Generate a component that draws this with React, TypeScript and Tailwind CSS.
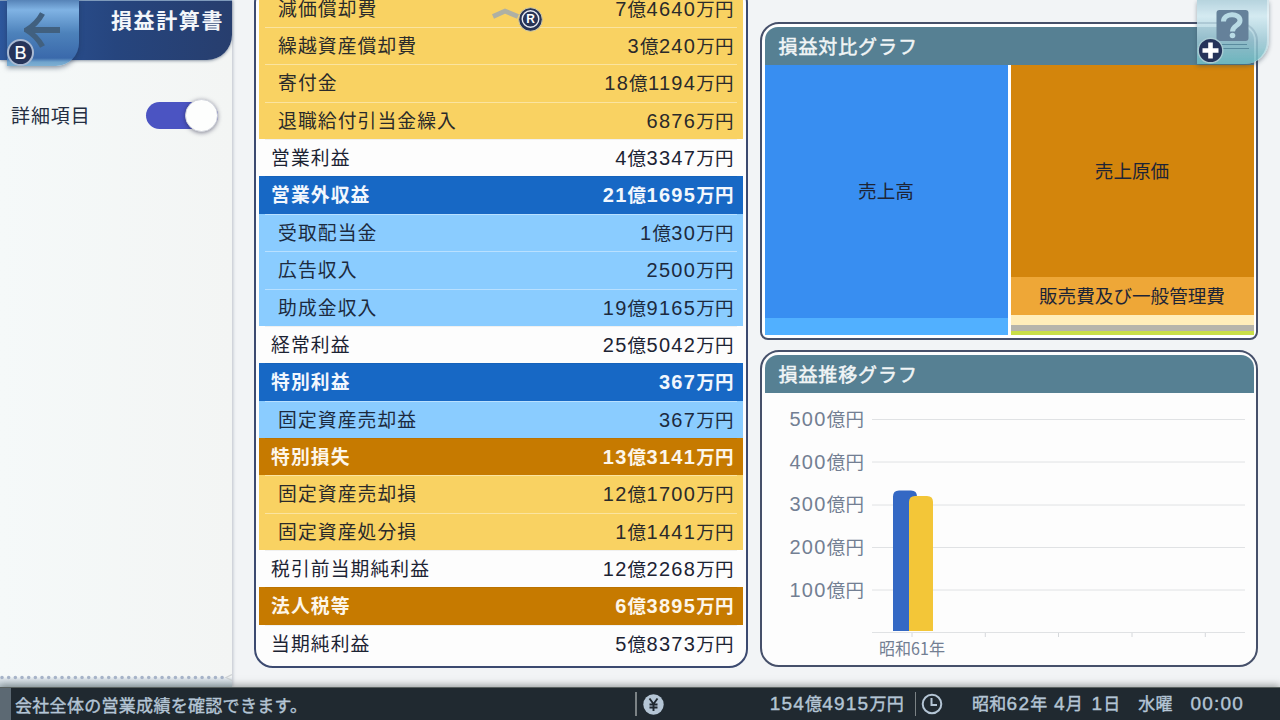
import clsx from 'clsx';

type Kind = 'total' | 'income' | 'incomeItem' | 'cost' | 'costItem';

const rows: { label: string; value: string; kind: Kind }[] = [
  { label: '減価償却費', value: '7億4640万円', kind: 'costItem' },
  { label: '繰越資産償却費', value: '3億240万円', kind: 'costItem' },
  { label: '寄付金', value: '18億1194万円', kind: 'costItem' },
  { label: '退職給付引当金繰入', value: '6876万円', kind: 'costItem' },
  { label: '営業利益', value: '4億3347万円', kind: 'total' },
  { label: '営業外収益', value: '21億1695万円', kind: 'income' },
  { label: '受取配当金', value: '1億30万円', kind: 'incomeItem' },
  { label: '広告収入', value: '2500万円', kind: 'incomeItem' },
  { label: '助成金収入', value: '19億9165万円', kind: 'incomeItem' },
  { label: '経常利益', value: '25億5042万円', kind: 'total' },
  { label: '特別利益', value: '367万円', kind: 'income' },
  { label: '固定資産売却益', value: '367万円', kind: 'incomeItem' },
  { label: '特別損失', value: '13億3141万円', kind: 'cost' },
  { label: '固定資産売却損', value: '12億1700万円', kind: 'costItem' },
  { label: '固定資産処分損', value: '1億1441万円', kind: 'costItem' },
  { label: '税引前当期純利益', value: '12億2268万円', kind: 'total' },
  { label: '法人税等', value: '6億3895万円', kind: 'cost' },
  { label: '当期純利益', value: '5億8373万円', kind: 'total' },
];

const rowStyle: Record<Kind, string> = {
  total: 'bg-[#fdfdfd] text-[#1c2333]',
  income: 'bg-[#1768c5] text-[#f2f7fd] font-bold',
  incomeItem: 'bg-[#8accff] text-[#1c2a3e]',
  cost: 'bg-[#c67a00] text-[#fdf6ea] font-bold',
  costItem: 'bg-[#f9d262] text-[#2a2a2a]',
};

const yLabels = ['500億円', '400億円', '300億円', '200億円', '100億円'];

// Digits are set a little larger and wider than the kanji around them
const Amount = ({ text, small }: { text: string; small?: boolean }) => (
  <span className={clsx('inline-flex items-baseline whitespace-pre', small ? 'text-[17px] tracking-[0.3px]' : 'text-[18.5px] tracking-[0.4px]')}>
    {text.split(/([\d:]+)/).map((part, i) =>
      /\d/.test(part) ? (
        <span key={i} className={clsx("font-['Liberation_Sans']", small ? 'text-[19px] tracking-[1.2px]' : 'text-[20px] tracking-[1.3px]')}>{part}</span>
      ) : (
        <span key={i}>{part}</span>
      )
    )}
  </span>
);

const PanelTitle = ({ children }: { children: string }) => (
  <h2 className="h-[38px] rounded-t-[13px] bg-[#568093] pl-3.5 text-[19px] leading-[37px] tracking-[0.9px] text-[#f1f5f6] [-webkit-text-stroke:0.5px]">
    {children}
  </h2>
);

const Sidebar = () => (
  <aside className="relative z-10 flex w-[232px] shrink-0 flex-col bg-gradient-to-r from-[#f5f9f9] to-[#f3f5f4] shadow-[1px_0_3px_rgba(90,100,120,0.35)]">
    <header className="relative h-[60px] shrink-0 rounded-br-[25px] border-t border-[#7e9abb] bg-gradient-to-r from-[#2d579c] via-[#26457e] to-[#273e6e] pr-2 text-right text-[21px] leading-[37px] font-bold tracking-[1.6px] text-[#f3f6fa] shadow-[0_1px_3px_rgba(40,60,90,0.5)]">
      損益計算書
      <button className="absolute -top-px left-[7px] flex h-[66px] w-[72px] justify-center rounded-br-[23px] bg-linear-[180deg,#5683b7_0%,#80b3e4_15%,#4d82bb_50%,#3a69ab_88%,#70a4cd_94%,#7eb0d3_100%] pt-[11px] shadow-[0_2px_5px_rgba(30,50,80,0.5)]">
        <svg width="38" height="38" viewBox="0 0 38 38" fill="none" stroke="#41607f" strokeWidth="6">
          <path d="M36 19H6" />
          <path d="M18.500 2.500C15.500 8 10 14.500 2.500 19C10 23.500 15.500 30 18.500 35.500" strokeWidth="5.5" />
        </svg>
      </button>
      <span className="absolute top-[38px] left-[7px] flex size-[27px] items-center justify-center rounded-full border-2 border-[#a9b9d2] bg-[#26345a] font-['Liberation_Sans'] text-[18px] font-normal leading-none tracking-normal text-white [-webkit-text-stroke:0.2px]">
        B
      </span>
    </header>

    <div className="mt-[41px] flex items-center justify-between pr-3.5 pl-[11px]">
      <span className="text-[19px] tracking-[0.9px] text-[#242e42]">詳細項目</span>
      <div className="flex h-[27px] w-[72px] items-center justify-end rounded-full bg-[#4b54c2]">
        <span className="size-[33px] shrink-0 rounded-full border border-[#d4d7de] bg-[#fdfefd] shadow-[0_1px_4px_rgba(30,30,60,0.5)]" />
      </div>
    </div>

    <div className="mt-auto h-[13px] bg-gradient-to-b from-transparent from-20% via-[#dce4ea] via-40% to-[#bccbd3]">
      <svg width="232" height="7" className="block">
        <path d="M2 3.5H226" stroke="#a8b5ca" strokeWidth="3.6" strokeLinecap="round" strokeDasharray="0 6.67" />
        <path d="M232 0.5L226 3.5L232 6.5" stroke="#cfd3d5" strokeWidth="1.2" fill="none" />
      </svg>
    </div>
  </aside>
);

const StatementTable = () => (
  <section className="relative -mt-4 ml-[22px] h-[684px] w-[494px] shrink-0 rounded-[19px] border-2 border-[#3c4a70] bg-[#fdfdfd] px-[3px] pt-[3.7px]">
    <ul>
      {rows.map((row) => {
        const item = row.kind === 'incomeItem' || row.kind === 'costItem';
        return (
          <li key={row.label} className={clsx('h-[37.37px] pr-1.5 pl-1.5 last:rounded-b-[15px]', rowStyle[row.kind])}>
            <div className={clsx('flex h-full justify-between border-t pr-[3px] leading-[34.5px]', item ? 'border-white/40 pl-[13px]' : 'border-black/5 pl-1.5')}>
              <span className="text-[18.8px] tracking-[1.1px]">{row.label}</span>
              <Amount text={row.value} />
            </div>
          </li>
        );
      })}
    </ul>
    {/* Scroll hint */}
    <div className="absolute top-[20px] left-[235px] flex">
      <svg width="28" height="14" viewBox="0 0 28 14" fill="none" stroke="#aeb0a4" strokeWidth="4.8">
        <path d="M2 10.500L14 5L27 10.500" />
      </svg>
      <svg width="25" height="25" viewBox="0 0 25 25" className="mt-px -ml-px">
        <circle cx="12.5" cy="12.5" r="11.8" fill="#283456" stroke="#cfc9a8" strokeWidth="1" />
        <circle cx="12.5" cy="12" r="8.3" fill="none" stroke="#e7ebf2" strokeWidth="1.4" />
        <text x="12.7" y="16.2" textAnchor="middle" fontFamily="Liberation Sans" fontSize="12" fontWeight="bold" fill="#fff">R</text>
      </svg>
    </div>
  </section>
);

const CompareChart = () => (
  <section className="h-[318px] rounded-t-[19px] rounded-b-[8px] border-2 border-[#46506a] bg-white px-[2.5px] pt-[3px]">
    <PanelTitle>損益対比グラフ</PanelTitle>
    <div className="flex h-[270px] gap-[3px] text-[18.6px] text-[#1d2436]">
      <div className="flex flex-1 flex-col">
        <div className="flex h-[253px] items-center justify-center bg-[#388ef1] pb-[3px]">売上高</div>
        <div className="h-[17px] bg-[#51b0ff]" />
      </div>
      <div className="flex flex-1 flex-col">
        <div className="flex h-[212px] items-center justify-center bg-[#d3850c] pb-0.5">売上原価</div>
        <div className="flex h-[38px] items-center justify-center bg-[#eea737] pb-0.5">販売費及び一般管理費</div>
        <div className="h-2.5 bg-[#ffedba]" />
        <div className="h-1.5 bg-[#b6b4ab]" />
        <div className="h-1 bg-[#c9de48]" />
      </div>
    </div>
  </section>
);

const TrendChart = () => (
  <section className="mt-[10px] h-[317px] rounded-[19px] border-2 border-[#46506a] bg-[#fdfdfd] px-[2.5px] pt-[3px]">
    <PanelTitle>損益推移グラフ</PanelTitle>
    <div className="flex">
      <div className="w-[107px] pt-1 pr-[7px] text-right text-[#737f93]">
        {yLabels.map((label) => (
          <div key={label} className="h-[42.7px] leading-[42.7px]"><Amount text={label} /></div>
        ))}
      </div>
      <svg width="382" height="270" viewBox="0 0 382 270">
        {[26.5, 69, 112, 154.5, 197, 239.5].map((y) => (
          <path key={y} d={`M0 ${y}H373`} stroke="#e0e2e4" />
        ))}
        {[40, 113.3, 186.5, 260, 333.3].map((x) => (
          <path key={x} d={`M${x} 240V244`} stroke="#d5d8db" />
        ))}
        <path d="M21 238V103.500Q21 97.500 27 97.500H39Q45 97.500 45 103.500V238Z" fill="#3468c4" />
        <path d="M37 238V109Q37 103 43 103H55Q61 103 61 109V238Z" fill="#f3c638" />
        <text x="7" y="262" fontSize="17" fill="#737f93" textLength="66" lengthAdjust="spacingAndGlyphs">昭和61年</text>
      </svg>
    </div>
  </section>
);

const HelpButton = () => (
  <div className="absolute top-0 right-[11px] h-[64px] w-[72px] rounded-br-[24px] border-r-2 border-white/40 bg-linear-[180deg,rgba(166,203,215,0.8)_0%,rgba(207,232,240,0.85)_25%,rgba(154,197,210,0.85)_65%,rgba(111,187,194,0.9)_100%] shadow-[0_2px_4px_rgba(50,70,90,0.45)]">
    <svg width="72" height="64" viewBox="0 0 72 64">
      <rect x="19.500" y="10" width="32" height="31" rx="3" fill="#65819a" />
      <path d="M26.500 21.500C26.500 13 43 12.500 43 20.500C43 26 35.500 25 35.500 31.500" fill="none" stroke="#b9dbe5" strokeWidth="5" />
      <circle cx="35.500" cy="35.500" r="2.8" fill="#b9dbe5" />
      <path d="M21 44.500H50M25 48.500H52" stroke="#598b9e" strokeWidth="1.2" />
      <circle cx="13.500" cy="50.500" r="12.3" fill="#26345a" stroke="#a9cbd2" strokeWidth="1.4" />
      <path d="M13.500 42.500V58.500M5.500 50.500H21.500" stroke="#fff" strokeWidth="4.6" />
    </svg>
  </div>
);

const StatusBar = () => (
  <footer className="flex h-[33px] shrink-0 items-center border-t border-[#59615f] bg-[#202930] text-[#b4c5d5] shadow-[0_-2px_7px_rgba(70,75,75,0.5)] [-webkit-text-stroke:0.4px]">
    <div className="h-full w-[11px] bg-[#5c6973]" />
    <p className="w-[624px] pt-px pl-1 text-[17px] tracking-[0.3px]">会社全体の営業成績を確認できます。</p>
    <div className="flex h-6 w-[280px] items-center justify-between border-l-2 border-[#7b8285] pr-[11px] pl-1.5">
      <svg width="21" height="21" viewBox="0 0 21 21">
        <circle cx="10.500" cy="10.500" r="10.200" fill="#b4c5d5" />
        <path d="M6.500 4.500L10.500 10L14.500 4.500M10.500 10V17M6.500 10.500H14.500M6.500 13.500H14.500" fill="none" stroke="#202930" strokeWidth="1.9" />
      </svg>
      <Amount text="154億4915万円" small />
    </div>
    <div className="flex h-6 flex-1 items-center border-l border-[#7b8285] pl-[5px]">
      <svg width="22" height="22" viewBox="0 0 22 22" fill="none" stroke="#b4c5d5" strokeWidth="2">
        <circle cx="11" cy="11" r="9.300" />
        <path d="M10.500 5V12H16" />
      </svg>
      <div className="ml-[29px] flex flex-1 items-baseline justify-between pr-9">
        <div className="flex gap-[6.5px]">
          <Amount text="昭和62年" small />
          <Amount text="4月" small />
          <span className="ml-0.5"><Amount text="1日" small /></span>
        </div>
        <Amount text="水曜" small />
        <Amount text="00:00" small />
      </div>
    </div>
  </footer>
);

export default function App() {
  return (
    <div className="flex h-[720px] w-[1280px] flex-col overflow-hidden bg-[#f2f4f6] font-['Noto_Sans_CJK_JP',sans-serif]">
      <div className="relative flex h-[687px] shrink-0">
        <Sidebar />
        <StatementTable />
        <main className="mt-[22px] ml-3 w-[498px]">
          <CompareChart />
          <TrendChart />
        </main>
        <HelpButton />
      </div>
      <div className="relative z-20">
        <StatusBar />
      </div>
    </div>
  );
}
